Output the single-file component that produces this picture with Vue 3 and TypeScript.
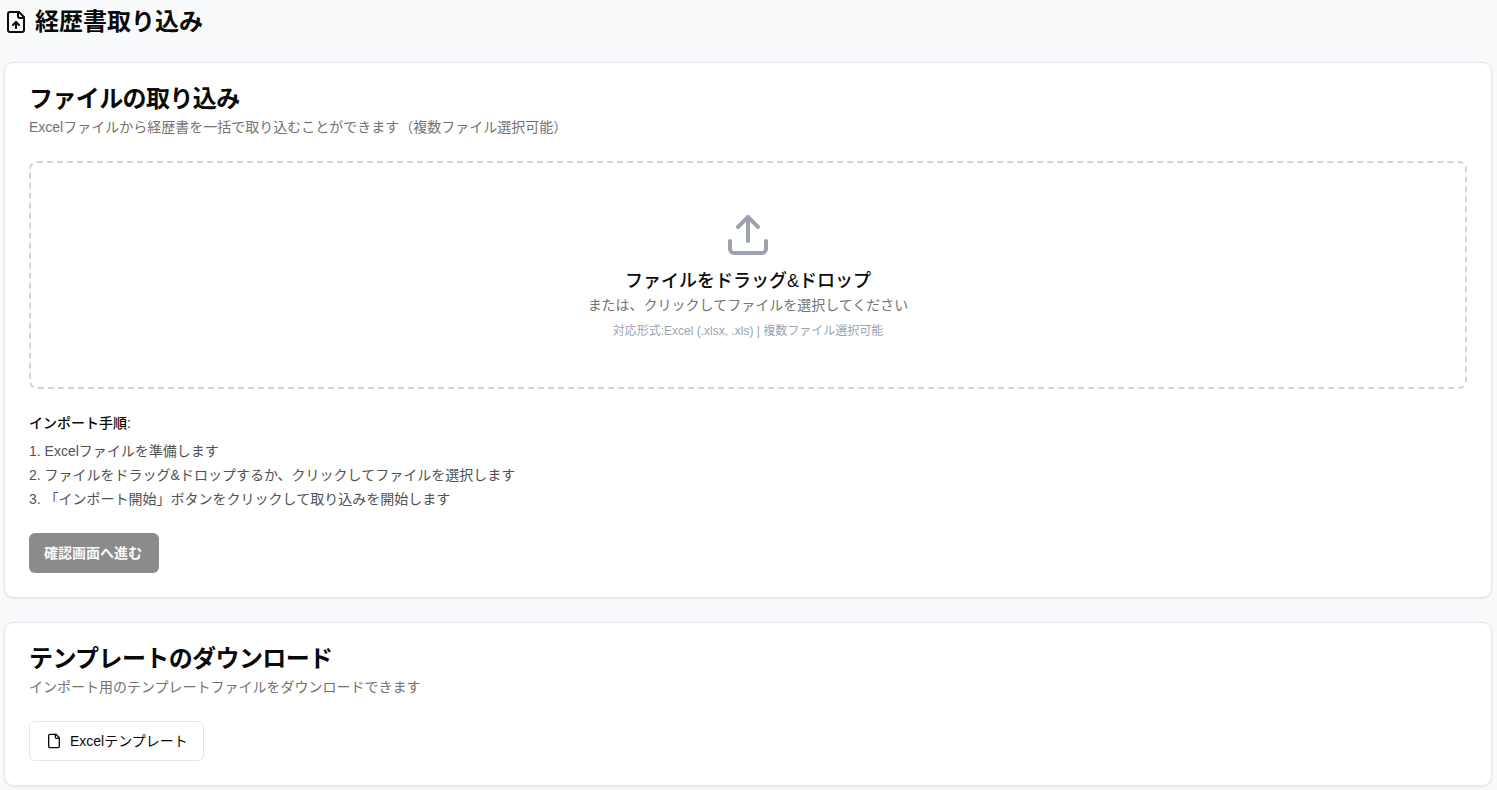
<script setup lang="ts">
const steps: string[] = [
  '1. Excelファイルを準備します',
  '2. ファイルをドラッグ&ドロップするか、クリックしてファイルを選択します',
  '3. 「インポート開始」ボタンをクリックして取り込みを開始します',
]
</script>

<template>
  <div class="page">
    <header class="page-head">
      <svg class="head-icon" viewBox="0 0 24 24" fill="none" stroke="currentColor" stroke-width="2" stroke-linecap="round" stroke-linejoin="round">
        <path d="M15 2H6a2 2 0 0 0-2 2v16a2 2 0 0 0 2 2h12a2 2 0 0 0 2-2V7Z" />
        <path d="M14 2v4a2 2 0 0 0 2 2h4" />
        <path d="M12 12v6" />
        <path d="m15 15-3-3-3 3" />
      </svg>
      <h1>経歴書取り込み</h1>
    </header>

    <section class="card">
      <h2>ファイルの取り込み</h2>
      <p class="desc">Excelファイルから経歴書を一括で取り込むことができます（複数ファイル選択可能）</p>

      <div class="drop">
        <svg class="drop-icon" viewBox="0 0 24 24" fill="none" stroke="currentColor" stroke-width="2" stroke-linecap="round" stroke-linejoin="round">
          <path d="M21 15v4a2 2 0 0 1-2 2H5a2 2 0 0 1-2-2v-4" />
          <polyline points="17 8 12 3 7 8" />
          <line x1="12" y1="3" x2="12" y2="15" />
        </svg>
        <p class="drop-title">ファイルをドラッグ&amp;ドロップ</p>
        <p class="drop-sub">または、クリックしてファイルを選択してください</p>
        <p class="drop-note">対応形式:Excel (.xlsx, .xls) | 複数ファイル選択可能</p>
      </div>

      <div class="steps">
        <p class="steps-title">インポート手順:</p>
        <ol>
          <li v-for="s in steps" :key="s">{{ s }}</li>
        </ol>
      </div>

      <button class="primary" type="button" disabled>確認画面へ進む</button>
    </section>

    <section class="card">
      <h2>テンプレートのダウンロード</h2>
      <p class="desc">インポート用のテンプレートファイルをダウンロードできます</p>
      <button class="outline" type="button">
        <svg class="btn-icon" viewBox="0 0 24 24" fill="none" stroke="currentColor" stroke-width="2" stroke-linecap="round" stroke-linejoin="round">
          <path d="M15 2H6a2 2 0 0 0-2 2v16a2 2 0 0 0 2 2h12a2 2 0 0 0 2-2V7Z" />
          <path d="M14 2v4a2 2 0 0 0 2 2h4" />
        </svg>
        <span>Excelテンプレート</span>
      </button>
    </section>
  </div>
</template>

<style>
html, body { margin: 0; background: #f9fafb; }
</style>

<style scoped>
.page {
  box-sizing: border-box;
  padding: 0 5px 0 4px;
  font-family: "Liberation Sans", "Noto Sans CJK JP", sans-serif;
  color: #0a0a0a;
}
.page-head {
  display: flex;
  align-items: center;
  gap: 7px;
  height: 44px;
  margin-bottom: 18px;
}
.head-icon { width: 24px; height: 24px; }
h1 { margin: 0; font-size: 24px; line-height: 32px; font-weight: 700; color: #0a0a0a; }
.card {
  background: #fff;
  border: 1px solid #e5e7eb;
  border-radius: 10px;
  box-shadow: 0 1px 3px rgba(0,0,0,.08);
  padding: 24px;
  margin-bottom: 24px;
}
h2 { margin: 0; font-size: 24px; line-height: 24px; font-weight: 700; letter-spacing: -0.025em; }
.desc { margin: 6px 0 0; font-size: 14px; line-height: 20px; color: #737373; }
.drop {
  margin-top: 24px;
  border: 2px dashed #d1d5db;
  border-radius: 8px;
  height: 228px;
  box-sizing: border-box;
  display: flex;
  flex-direction: column;
  align-items: center;
  padding-top: 48px;
}
.drop-icon { width: 48px; height: 48px; color: #9ca3af; display: block; margin-bottom: 10px; }
.drop p { margin: 0; }
.drop-title { font-size: 18px; line-height: 24px; font-weight: 500; color: #0a0a0a; }
.drop-sub { font-size: 14px; line-height: 20px; color: #737373; margin-top: 2px !important; }
.drop-note { font-size: 12px; line-height: 16px; color: #9ca3af; margin-top: 8px !important; }
.steps { margin-top: 24px; font-size: 14px; }
.steps-title { margin: 0 0 8px; line-height: 20px; font-weight: 500; }
ol { margin: 0; padding: 0; list-style: none; color: #525252; }
li { line-height: 20px; margin-bottom: 4px; }
.primary {
  display: block;
  margin-top: 24px;
  height: 40px;
  width: 130px;
  padding: 0 2px 2px 0;
  border: 0;
  border-radius: 6px;
  background: #8b8b8b;
  color: #fafafa;
  font: 700 14px "Liberation Sans", "Noto Sans CJK JP", sans-serif;
}
.outline {
  display: inline-flex;
  align-items: center;
  gap: 8px;
  margin-top: 24px;
  height: 40px;
  padding: 0 15px 2px 16px;
  background: #fff;
  border: 1px solid #e5e7eb;
  border-radius: 6px;
  color: #0a0a0a;
  font: 400 14px "Liberation Sans", "Noto Sans CJK JP", sans-serif;
}
.btn-icon { width: 16px; height: 16px; margin-top: 2px; }
</style>
